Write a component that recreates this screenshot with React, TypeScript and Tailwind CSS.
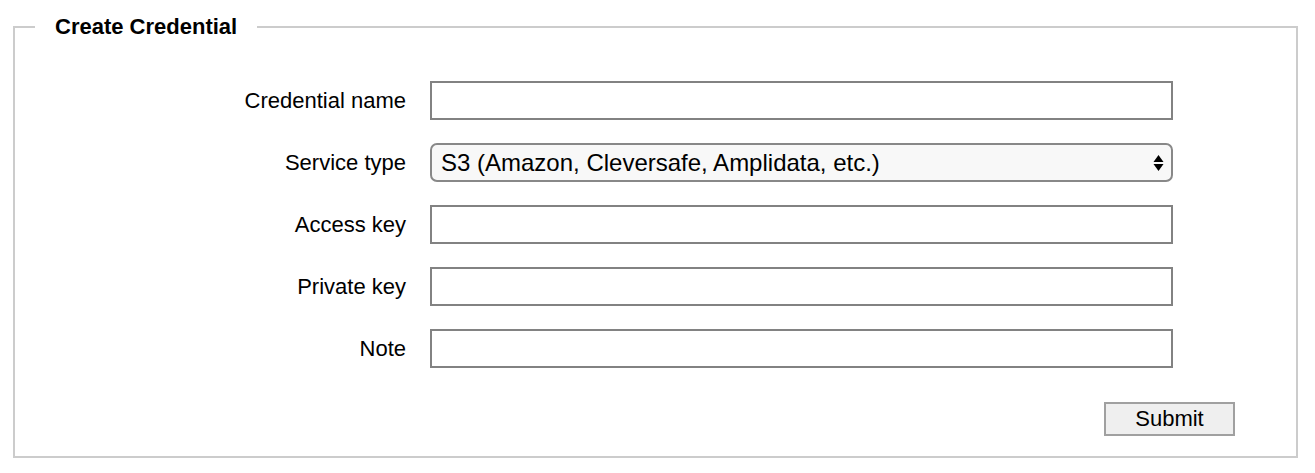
import { useState } from "react";

const fields = [
  { name: "name", label: "Credential name" },
  { name: "service", label: "Service type" },
  { name: "access", label: "Access key" },
  { name: "private", label: "Private key" },
  { name: "note", label: "Note" },
];

const SelectArrows = () => (
  <svg width="11" height="18" viewBox="0 0 11 18" className="pointer-events-none absolute right-[9px] top-1/2 -translate-y-1/2">
    <path d="M5.5 1 L10.5 8 L0.5 8 Z" fill="#000" />
    <path d="M5.5 17 L10.5 10 L0.5 10 Z" fill="#000" />
  </svg>
);

const App = () => {
  const [values, setValues] = useState<Record<string, string>>({
    name: "",
    service: "s3",
    access: "",
    private: "",
    note: "",
  });

  const handleChange = (key: string, value: string) => {
    setValues({ ...values, [key]: value });
  };

  return (
    <div className="min-h-screen bg-white pt-[15px] pl-[13px] font-['Liberation_Sans',Arial,sans-serif] text-black">
      <fieldset className="w-[1285px] border-2 border-[#cccccc] pb-[20px]">
        <legend className="ml-[20px] px-[20px] text-[22px] font-bold leading-[24px]">Create Credential</legend>

        <div className="grid grid-cols-[391px_743px] gap-x-[24px] gap-y-[23px] pt-[42px]">
          {fields.map((f) => (
            <div key={f.name} className="contents">
              <label className="flex h-[39px] items-center justify-end text-[22px]">{f.label}</label>
              {f.name === "service" ? (
                <div className="relative h-[39px]">
                  <select
                    value={values.service}
                    onChange={(e) => handleChange("service", e.target.value)}
                    className="h-full w-full appearance-none rounded-[7px] border-2 border-[#888888] bg-[#f8f8f8] pl-[9px] text-[24px] outline-none"
                  >
                    <option value="s3">S3 (Amazon, Cleversafe, Amplidata, etc.)</option>
                    <option value="swift">Swift</option>
                  </select>
                  <SelectArrows />
                </div>
              ) : (
                <input
                  type="text"
                  value={values[f.name]}
                  onChange={(e) => handleChange(f.name, e.target.value)}
                  className="h-[39px] w-full border-2 border-[#828282] bg-white px-2 text-[20px] outline-none"
                />
              )}
            </div>
          ))}
        </div>

        <div className="flex justify-end pr-[61px] pt-[34px]">
          <button
            type="button"
            className="h-[34px] w-[131px] border-2 border-[#a0a0a0] bg-[#efefef] text-[22px] leading-none"
          >
            Submit
          </button>
        </div>
      </fieldset>
    </div>
  );
};

export default App;
